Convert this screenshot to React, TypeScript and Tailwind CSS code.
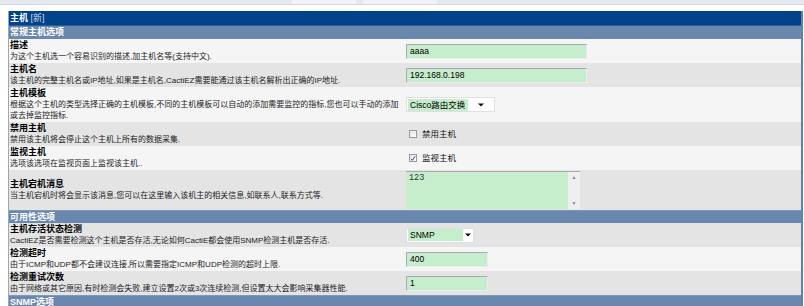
import React from 'react';

const FONT = "font-['Liberation_Sans','Noto_Sans_CJK_SC',sans-serif]";

type RowProps = {
  title: string;
  lines: string[];
  dark?: boolean;
  children?: React.ReactNode;
};

const Row: React.FC<RowProps> = ({ title, lines, dark, children }) => (
  <div className={`flex items-center py-px ${dark ? 'bg-[#e4e4e4]' : 'bg-[#f5f5f5]'}`}>
    <div className="w-[397px] shrink-0 pl-px whitespace-nowrap">
      <div className="text-[9px] leading-[11px] font-bold text-black">{title}</div>
      {lines.map((l) => (
        <div key={l} className="text-[8px] leading-[11px] text-[#222]">{l}</div>
      ))}
    </div>
    <div className="flex-1 flex items-center">{children}</div>
  </div>
);

const Section: React.FC<{ label: string }> = ({ label }) => (
  <div className="h-[13px] bg-[#6a87ad] text-white text-[9px] font-bold leading-[13px] pl-px border-t border-[#7f99bb]">
    {label}
  </div>
);

const TextInput: React.FC<{ value: string; w: string }> = ({ value, w }) => (
  <div
    className={`${w} h-[15px] bg-[#c6edcc] border-t border-l border-[#a9a9b3] border-b border-r border-b-[#ececec] border-r-[#ececec] text-[8.5px] leading-[13px] px-[3px] text-black`}
  >
    {value}
  </div>
);

const Select: React.FC<{ value: string; w: string; inner: string }> = ({ value, w, inner }) => (
  <div className={`${w} h-[15px] bg-white border border-[#e0e0e0] flex items-center pl-px`}>
    <div className={`${inner} h-[12px] bg-[#c6edcc] text-[8.5px] leading-[12px] px-[2px] text-black whitespace-nowrap overflow-hidden`}>
      {value}
    </div>
    <div className="flex-1 flex justify-center">
      <svg width="6" height="4" viewBox="0 0 6 4">
        <path d="M0 0.5 L6 0.5 L3 3.5 Z" fill="#111" />
      </svg>
    </div>
  </div>
);

const Check: React.FC<{ checked?: boolean; label: string }> = ({ checked, label }) => (
  <div className="flex items-center gap-[5px] pl-[3px]">
    <div className="w-[8px] h-[8px] border border-[#9a9a9a] bg-gradient-to-br from-[#e4e4e4] to-white flex items-center justify-center">
      {checked && (
        <svg width="7" height="7" viewBox="0 0 7 7">
          <path d="M1.2 3.8 L2.8 5.6 L6 1" stroke="#1d3f8a" strokeWidth="1.1" fill="none" />
        </svg>
      )}
    </div>
    <span className="text-[8.5px] text-[#111]">{label}</span>
  </div>
);

export default function App() {
  return (
    <div className={`w-[804px] h-[306px] overflow-hidden bg-white ${FONT}`}>
      <div className="h-[5px] bg-[#e6e8ef] border-b border-[#d5d9e3] flex">
        <div className="ml-[292px] w-[64px] h-[4px] bg-[#f1f2f6]" />
        <div className="ml-[7px] w-[74px] h-[4px] bg-[#f1f2f6]" />
      </div>
      <div className="h-[6px]" />
      <div className="ml-[8px] w-[795px] border-l border-[#9ba6b9] border-r-2 border-r-[#5b82b6]">
        <div className="h-[15px] bg-[#00438a] text-[9px] leading-[15px] pl-px border-b border-[#2c5d98]">
          <span className="font-bold text-white">主机</span>
          <span className="text-[#c9d4e5]"> [新]</span>
        </div>
        <div className="h-[13px] bg-[#6a87ad] text-white text-[9px] font-bold leading-[13px] pl-px">
          常规主机选项
        </div>
        <Row title="描述" lines={['为这个主机选一个容易识别的描述,加主机名等(支持中文).']}>
          <TextInput value="aaaa" w="w-[181px]" />
        </Row>
        <Row dark title="主机名" lines={['该主机的完整主机名或IP地址,如果是主机名,CactiEZ需要能通过该主机名解析出正确的IP地址.']}>
          <TextInput value="192.168.0.198" w="w-[181px]" />
        </Row>
        <Row
          title="主机模板"
          lines={['根据这个主机的类型选择正确的主机模板,不同的主机模板可以自动的添加需要监控的指标,您也可以手动的添加', '或去掉监控指标.']}
        >
          <Select value="Cisco路由交换" w="w-[89px]" inner="w-[60px]" />
        </Row>
        <Row dark title="禁用主机" lines={['禁用该主机将会停止这个主机上所有的数据采集.']}>
          <Check label="禁用主机" />
        </Row>
        <Row title="监视主机" lines={['选项该选项在监视页面上监视该主机..']}>
          <Check checked label="监视主机" />
        </Row>
        <Row dark title="主机宕机消息" lines={['当主机宕机时将会显示该消息,您可以在这里输入该机主的相关信息,如联系人,联系方式等.']}>
          <div className="w-[174px] h-[38px] flex border-t border-[#a9a9b3]">
            <div className="w-[162px] bg-[#c6edcc] font-['Liberation_Mono',monospace] text-[8.5px] leading-[11px] px-[3px] pt-px text-[#333]">
              123
            </div>
            <div className="flex-1 bg-[#efefef] flex flex-col justify-between items-center py-[3px] text-[5px] leading-[5px] text-[#888]">
              <span>▲</span>
              <span>▼</span>
            </div>
          </div>
        </Row>
        <Section label="可用性选项" />
        <Row dark title="主机存活状态检测" lines={['CactiEZ是否需要检测这个主机是否存活,无论如何CactiE都会使用SNMP检测主机是否存活.']}>
          <Select value="SNMP" w="w-[68px]" inner="w-[55px]" />
        </Row>
        <Row title="检测超时" lines={['由于ICMP和UDP都不会建议连接,所以需要指定ICMP和UDP检测的超时上限.']}>
          <TextInput value="400" w="w-[82px]" />
        </Row>
        <Row dark title="检测重试次数" lines={['由于网络或其它原因,有时检测会失败,建立设置2次或3次连续检测,但设置太大会影响采集器性能.']}>
          <TextInput value="1" w="w-[82px]" />
        </Row>
        <Section label="SNMP选项" />
      </div>
    </div>
  );
}
